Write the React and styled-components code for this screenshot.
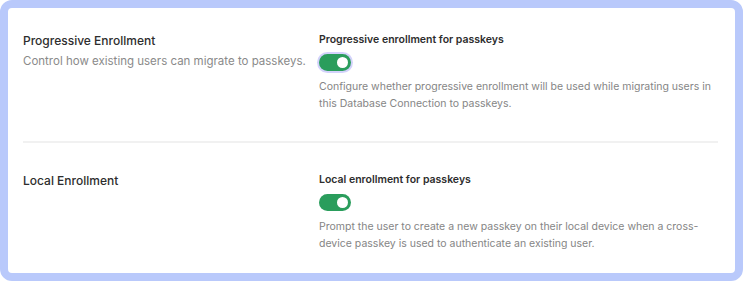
import React, { useState } from 'react';
import styled, { createGlobalStyle } from 'styled-components';

const GlobalStyle = createGlobalStyle`
  html, body {
    margin: 0;
    padding: 0;
    background: #ffffff;
  }
  body {
    font-family: Inter, 'Noto Sans', sans-serif;
    -webkit-font-smoothing: antialiased;
  }
`;

const Frame = styled.div`
  width: 743px;
  height: 281px;
  box-sizing: border-box;
  border: 8px solid #b9c9fb;
  border-radius: 12px;
  background: #ffffff;
  padding: 0 17px 0 15px;
`;

const Section = styled.section`
  display: grid;
  grid-template-columns: 296px 1fr;
  padding: ${(p) => p.$pad};
  border-bottom: ${(p) => (p.$divider ? '2px solid #f1f1f1' : 'none')};
`;

const Heading = styled.div`
  display: flex;
  flex-direction: column;
  gap: 4px;

  h3 {
    margin: 0;
    font-size: 12px;
    line-height: 17px;
    font-weight: 500;
    color: #2d2d2d;
  }

  p {
    margin: 0;
    font-size: 11.5px;
    line-height: 16px;
    color: #8a8a8a;
  }
`;

const Field = styled.div`
  display: flex;
  flex-direction: column;
  align-items: flex-start;
`;

const Label = styled.div`
  font-size: 10.5px;
  line-height: 15px;
  font-weight: 600;
  color: #2d2d2d;
  margin-bottom: 7px;
`;

const Hint = styled.p`
  margin: 8px 0 0;
  font-size: 10.5px;
  line-height: 16.5px;
  color: #858585;
`;

const Track = styled.button`
  position: relative;
  width: 32px;
  height: 17px;
  padding: 0;
  border: none;
  border-radius: 9px;
  background: ${(p) => (p.$on ? '#2a9d5c' : '#c9c9c9')};
  box-shadow: ${(p) => (p.$focus ? '0 0 0 2px #d3d2fb' : 'none')};
  cursor: pointer;

  &::after {
    content: '';
    position: absolute;
    top: 3px;
    left: ${(p) => (p.$on ? '18px' : '3px')};
    width: 11px;
    height: 11px;
    border-radius: 50%;
    background: #ffffff;
  }
`;

const Toggle = ({ initial, focus }) => {
  const [on, setOn] = useState(initial);
  return <Track $on={on} $focus={focus} onClick={() => setOn(!on)} aria-pressed={on} />;
};

const App = () => (
  <>
    <GlobalStyle />
    <Frame>
      <Section $divider $pad="24px 0 29px">
        <Heading>
          <h3>Progressive Enrollment</h3>
          <p>Control how existing users can migrate to passkeys.</p>
        </Heading>
        <Field>
          <Label>Progressive enrollment for passkeys</Label>
          <Toggle initial focus />
          <Hint>
            Configure whether progressive enrollment will be used while migrating users in
            this Database Connection to passkeys.
          </Hint>
        </Field>
      </Section>
      <Section $pad="29px 0 0">
        <Heading>
          <h3>Local Enrollment</h3>
        </Heading>
        <Field>
          <Label>Local enrollment for passkeys</Label>
          <Toggle initial />
          <Hint>
            Prompt the user to create a new passkey on their local device when a cross-device
            passkey is used to authenticate an existing user.
          </Hint>
        </Field>
      </Section>
    </Frame>
  </>
);

export default App;
